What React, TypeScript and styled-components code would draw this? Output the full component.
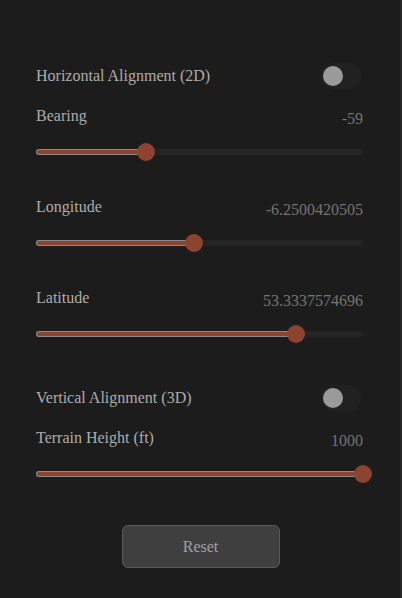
import styled, { createGlobalStyle } from "styled-components";

const GlobalStyle = createGlobalStyle`
  html, body {
    margin: 0;
    padding: 0;
    background: #1c1c1c;
  }
  body {
    font-family: "Liberation Serif", "Times New Roman", serif;
  }
`;

interface SliderProps {
  label: string;
  value: string;
  ratio: number;
}

const Slider: React.FC<SliderProps> = ({ label, value, ratio }) => {
  return (
    <Field>
      <LabelRow>
        <Label>{label}</Label>
        <Value>{value}</Value>
      </LabelRow>
      <Track>
        <Fill style={{ width: `${ratio * 100}%` }} />
        <Thumb style={{ left: `${ratio * 100}%` }} />
      </Track>
    </Field>
  );
};

const Toggle: React.FC<{ label: string }> = ({ label }) => {
  return (
    <ToggleRow>
      <Label>{label}</Label>
      <Switch>
        <Knob />
      </Switch>
    </ToggleRow>
  );
};

const App = () => {
  return (
    <>
      <GlobalStyle />
      <Panel>
        <Section>
          <Toggle label="Horizontal Alignment (2D)" />
          <Fields>
            <Slider label="Bearing" value="-59" ratio={121 / 360} />
            <Slider label="Longitude" value="-6.2500420505" ratio={(180 - 6.2500420505) / 360} />
            <Slider label="Latitude" value="53.3337574696" ratio={(90 + 53.3337574696) / 180} />
          </Fields>
        </Section>
        <Section>
          <Toggle label="Vertical Alignment (3D)" />
          <Fields>
            <Slider label="Terrain Height (ft)" value="1000" ratio={1} />
          </Fields>
        </Section>
        <ButtonRow>
          <ResetButton>Reset</ResetButton>
        </ButtonRow>
      </Panel>
    </>
  );
};

const Panel = styled.div`
  box-sizing: border-box;
  height: 598px;
  padding: 63px 37px 0 36px;
  border-right: 2px solid #262626;
  display: flex;
  flex-direction: column;
  gap: 48px;
`;

const Section = styled.div`
  display: flex;
  flex-direction: column;
  gap: 17px;
`;

const Fields = styled.div`
  display: flex;
  flex-direction: column;
  gap: 42px;
`;

const ToggleRow = styled.div`
  display: flex;
  align-items: center;
  justify-content: space-between;
  height: 26px;
`;

const Label = styled.span`
  font-size: 16px;
  line-height: 20px;
  color: #acacac;
`;

const Value = styled.span`
  font-size: 16px;
  line-height: 20px;
  color: #747474;
  padding-top: 3px;
`;

const Switch = styled.div`
  box-sizing: border-box;
  width: 40px;
  height: 26px;
  margin-right: 2px;
  border-radius: 13px;
  background: #212121;
  display: flex;
  align-items: center;
  padding-left: 2px;
`;

const Knob = styled.div`
  width: 20px;
  height: 20px;
  border-radius: 50%;
  background: #9a9a9a;
`;

const Field = styled.div`
  display: flex;
  flex-direction: column;
  gap: 19px;
`;

const LabelRow = styled.div`
  display: flex;
  justify-content: space-between;
  align-items: flex-start;
  height: 24px;
`;

const Track = styled.div`
  position: relative;
  height: 6px;
  border-radius: 3px;
  background: #242424;
`;

const Fill = styled.div`
  box-sizing: border-box;
  height: 6px;
  border-radius: 3px;
  background: #8c4330;
  border: 1px solid #8a8a8a;
  border-right: none;
`;

const Thumb = styled.div`
  position: absolute;
  top: 50%;
  width: 18px;
  height: 18px;
  border-radius: 50%;
  background: #8c4330;
  transform: translate(-50%, -50%);
`;

const ButtonRow = styled.div`
  display: flex;
  justify-content: center;
  padding-left: 2px;
`;

const ResetButton = styled.button`
  box-sizing: border-box;
  width: 158px;
  height: 43px;
  border-radius: 6px;
  background: #3f3f3f;
  border: 1px solid #5a5a5a;
  color: #a0a0a0;
  font-family: "Liberation Serif", "Times New Roman", serif;
  font-size: 16px;
`;

export default App;
